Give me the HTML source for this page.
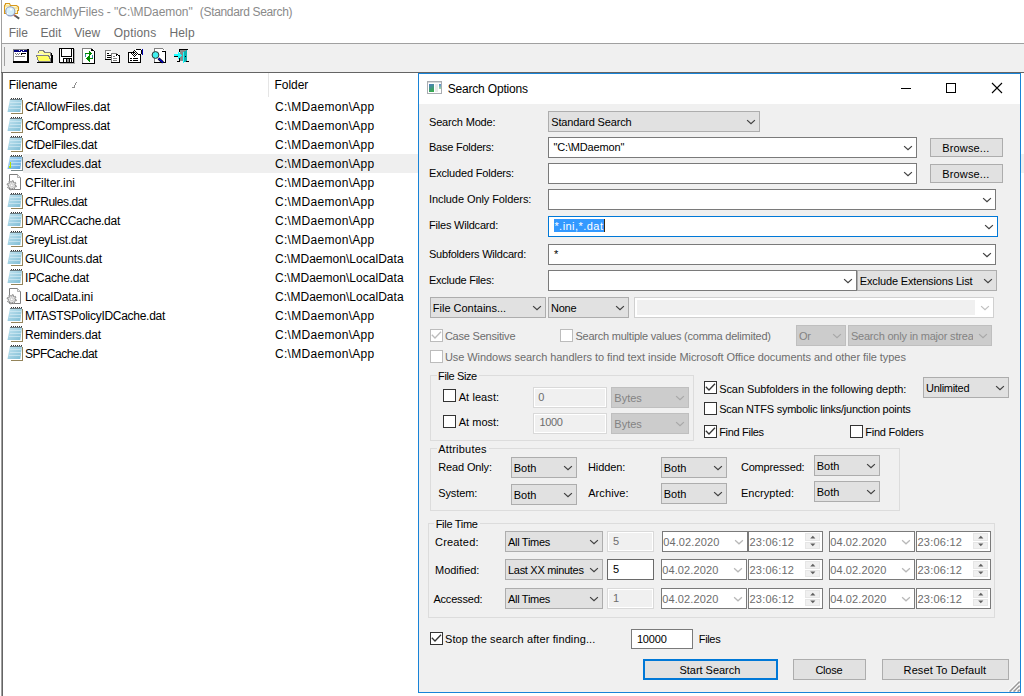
<!DOCTYPE html>
<html><head><meta charset="utf-8"><style>
html,body{margin:0;padding:0;width:1024px;height:696px;overflow:hidden;background:#fff;position:relative}
.a{position:absolute;box-sizing:border-box}
.t{font-family:"Liberation Sans",sans-serif;line-height:14px;white-space:pre;}
svg.a{overflow:visible}
</style></head><body>
<div class="a" style="left:1px;top:0px;width:1px;height:696px;background:#a0a0a0;"></div>
<svg class="a" style="left:0px;top:0px" width="24" height="24" viewBox="0 0 24 24" shape-rendering="crispEdges"><g shape-rendering="geometricPrecision">
<path d="M4.5 13.5 V5.5 L5.5 4.5 V3.5 H9.5 L10.5 5.5 H16.5 L18.5 7 V10.5 H17.5 V13.5z" fill="#fffbd0" stroke="#d8981c" stroke-width="1.1"/>
<path d="M5 6 H10 L11 8 H18" fill="none" stroke="#f0c860" stroke-width="0.8"/>
<path d="M14 15 L19.2 18.6" stroke="#5a5a5a" stroke-width="2"/>
<path d="M13.3 14.6 L15.5 16.3" stroke="#f06040" stroke-width="1.4" opacity="0.6"/>
<circle cx="10.3" cy="11.3" r="4.6" fill="#d6f0fb" stroke="#8c9cc4" stroke-width="1.1"/>
<rect x="10" y="8.5" width="2" height="2" fill="#fff"/><rect x="6.8" y="12.8" width="1.4" height="1.4" fill="#fff"/></g></svg>
<div class="a t" id="t0" style="left:24.90px;top:5px;color:#8a8a8a;font-size:12px;letter-spacing:-0.051px;">SearchMyFiles - &quot;C:\MDaemon&quot;</div>
<div class="a t" id="t1" style="left:199.80px;top:5px;color:#8a8a8a;font-size:12px;letter-spacing:-0.333px;">(Standard Search)</div>
<div class="a t" id="t2" style="left:8.80px;top:26px;color:#6d6d6d;font-size:12px;letter-spacing:-0.111px;">File</div>
<div class="a t" id="t3" style="left:40.40px;top:26px;color:#6d6d6d;font-size:12px;letter-spacing:0.078px;">Edit</div>
<div class="a t" id="t4" style="left:74.20px;top:26px;color:#6d6d6d;font-size:12px;letter-spacing:0.026px;">View</div>
<div class="a t" id="t5" style="left:113.80px;top:26px;color:#6d6d6d;font-size:12px;letter-spacing:0.177px;">Options</div>
<div class="a t" id="t6" style="left:169.40px;top:26px;color:#6d6d6d;font-size:12px;letter-spacing:0.178px;">Help</div>
<div class="a" style="left:2px;top:43px;width:1022px;height:1px;background:#a0a0a0;"></div>
<div class="a" style="left:2px;top:44px;width:1022px;height:28px;background:#f0f0f0;"></div>
<div class="a" style="left:4px;top:47px;width:1px;height:19px;background:#a0a0a0;"></div>
<div class="a" style="left:1px;top:72px;width:1023px;height:1px;background:#646464;"></div>
<div class="a" style="left:2px;top:73px;width:1px;height:623px;background:#646464;"></div>
<div class="a t" id="t7" style="left:8.80px;top:78px;color:#000;font-size:12px;letter-spacing:-0.107px;">Filename</div>
<div class="a" style="left:76px;top:82px;width:1px;height:1px;background:#8e8e8e;"></div>
<div class="a" style="left:75px;top:83px;width:1px;height:1px;background:#8e8e8e;"></div>
<div class="a" style="left:75px;top:84px;width:1px;height:1px;background:#8e8e8e;"></div>
<div class="a" style="left:74px;top:85px;width:1px;height:1px;background:#8e8e8e;"></div>
<div class="a" style="left:74px;top:86px;width:1px;height:1px;background:#8e8e8e;"></div>
<div class="a" style="left:72px;top:87px;width:1px;height:1px;background:#8e8e8e;"></div>
<div class="a" style="left:73px;top:87px;width:1px;height:1px;background:#8e8e8e;"></div>
<div class="a" style="left:74px;top:87px;width:1px;height:1px;background:#8e8e8e;"></div>
<div class="a" style="left:268px;top:73px;width:1px;height:24px;background:#e5e5e5;"></div>
<div class="a t" id="t8" style="left:274.60px;top:78px;color:#000;font-size:12px;letter-spacing:-0.069px;">Folder</div>
<div class="a" style="left:23px;top:154px;width:1001px;height:19px;background:#efefef;"></div>
<svg class="a" style="left:6px;top:97px" width="18" height="18" viewBox="0 0 18 18" shape-rendering="crispEdges"><defs><linearGradient id="g0" x1="0" y1="0" x2="1" y2="1"><stop offset="0" stop-color="#c6e6f2"/><stop offset="1" stop-color="#7dbcd4"/></linearGradient></defs>
<path d="M5 3 h11.5 v13.5 h-11.5z" fill="#fff"/>
<path d="M16.5 3 V16.5 H5" fill="none" stroke="#94845a" stroke-width="1"/>
<path d="M4 2 H16 L14.3 15 H1.5z" fill="url(#g0)" shape-rendering="geometricPrecision"/>
<path d="M4 5.5h11M3.6 8.5h11M3.2 11.5h11" stroke="#d8eef6" stroke-width="0.8" opacity="0.8"/>
<path d="M5 1.5h1M7 1.5h1M9 1.5h1M11 1.5h1M13 1.5h1M15 1.5h1" stroke="#3a3a3a" stroke-width="1"/><path d="M4 2.5h12" stroke="#6a7a80" stroke-width="1"/></svg>
<div class="a t" id="t9" style="left:25.00px;top:100px;color:#000;font-size:12px;letter-spacing:-0.064px;">CfAllowFiles.dat</div>
<div class="a t" id="t10" style="left:275.00px;top:100px;color:#000;font-size:12px;letter-spacing:0.295px;">C:\MDaemon\App</div>
<svg class="a" style="left:6px;top:116px" width="18" height="18" viewBox="0 0 18 18" shape-rendering="crispEdges"><defs><linearGradient id="g1" x1="0" y1="0" x2="1" y2="1"><stop offset="0" stop-color="#c6e6f2"/><stop offset="1" stop-color="#7dbcd4"/></linearGradient></defs>
<path d="M5 3 h11.5 v13.5 h-11.5z" fill="#fff"/>
<path d="M16.5 3 V16.5 H5" fill="none" stroke="#94845a" stroke-width="1"/>
<path d="M4 2 H16 L14.3 15 H1.5z" fill="url(#g1)" shape-rendering="geometricPrecision"/>
<path d="M4 5.5h11M3.6 8.5h11M3.2 11.5h11" stroke="#d8eef6" stroke-width="0.8" opacity="0.8"/>
<path d="M5 1.5h1M7 1.5h1M9 1.5h1M11 1.5h1M13 1.5h1M15 1.5h1" stroke="#3a3a3a" stroke-width="1"/><path d="M4 2.5h12" stroke="#6a7a80" stroke-width="1"/></svg>
<div class="a t" id="t11" style="left:25.00px;top:119px;color:#000;font-size:12px;letter-spacing:-0.122px;">CfCompress.dat</div>
<div class="a t" id="t12" style="left:275.00px;top:119px;color:#000;font-size:12px;letter-spacing:0.295px;">C:\MDaemon\App</div>
<svg class="a" style="left:6px;top:135px" width="18" height="18" viewBox="0 0 18 18" shape-rendering="crispEdges"><defs><linearGradient id="g2" x1="0" y1="0" x2="1" y2="1"><stop offset="0" stop-color="#c6e6f2"/><stop offset="1" stop-color="#7dbcd4"/></linearGradient></defs>
<path d="M5 3 h11.5 v13.5 h-11.5z" fill="#fff"/>
<path d="M16.5 3 V16.5 H5" fill="none" stroke="#94845a" stroke-width="1"/>
<path d="M4 2 H16 L14.3 15 H1.5z" fill="url(#g2)" shape-rendering="geometricPrecision"/>
<path d="M4 5.5h11M3.6 8.5h11M3.2 11.5h11" stroke="#d8eef6" stroke-width="0.8" opacity="0.8"/>
<path d="M5 1.5h1M7 1.5h1M9 1.5h1M11 1.5h1M13 1.5h1M15 1.5h1" stroke="#3a3a3a" stroke-width="1"/><path d="M4 2.5h12" stroke="#6a7a80" stroke-width="1"/></svg>
<div class="a t" id="t13" style="left:25.00px;top:138px;color:#000;font-size:12px;letter-spacing:-0.240px;">CfDelFiles.dat</div>
<div class="a t" id="t14" style="left:275.00px;top:138px;color:#000;font-size:12px;letter-spacing:0.295px;">C:\MDaemon\App</div>
<svg class="a" style="left:6px;top:154px" width="18" height="18" viewBox="0 0 18 18" shape-rendering="crispEdges"><defs><linearGradient id="g3" x1="0" y1="0" x2="1" y2="1"><stop offset="0" stop-color="#b4dcf6"/><stop offset="1" stop-color="#5aa6e0"/></linearGradient></defs>
<path d="M5 3 h11.5 v13.5 h-11.5z" fill="#fff"/>
<path d="M16.5 3 V16.5 H5" fill="none" stroke="#7a8888" stroke-width="1"/>
<path d="M4 2 H16 L14.3 15 H1.5z" fill="url(#g3)" shape-rendering="geometricPrecision"/>
<path d="M4 5.5h11M3.6 8.5h11M3.2 11.5h11" stroke="#d8eef6" stroke-width="0.8" opacity="0.8"/>
<path d="M5 1.5h1M7 1.5h1M9 1.5h1M11 1.5h1M13 1.5h1M15 1.5h1" stroke="#3a3a3a" stroke-width="1"/><path d="M4 2.5h12" stroke="#6a7a80" stroke-width="1"/><path d="M4.5 8 V13.5 H3.5 V12" fill="none" stroke="#b8e000" stroke-width="1.6"/></svg>
<div class="a t" id="t15" style="left:25.00px;top:157px;color:#000;font-size:12px;letter-spacing:-0.051px;">cfexcludes.dat</div>
<div class="a t" id="t16" style="left:275.00px;top:157px;color:#000;font-size:12px;letter-spacing:0.295px;">C:\MDaemon\App</div>
<svg class="a" style="left:6px;top:173px" width="18" height="18" viewBox="0 0 18 18" shape-rendering="crispEdges"><g shape-rendering="geometricPrecision"><path d="M3.5 1.5 H11.5 L14.5 4.5 V16.5 H3.5z" fill="#fff" stroke="#7f7f7f" stroke-width="1"/>
<path d="M11.5 1.5 V4.5 H14.5" fill="#f0f0f0" stroke="#9a9a9a" stroke-width="0.8"/>
<g transform="translate(5.75,12.3)"><path d="M3.30 0.00 L4.67 0.55 L4.41 1.63 L2.94 1.50 L2.33 2.33 L2.91 3.69 L1.97 4.27 L1.02 3.14 L0.00 3.30 L-0.55 4.67 L-1.63 4.41 L-1.50 2.94 L-2.33 2.33 L-3.69 2.91 L-4.27 1.97 L-3.14 1.02 L-3.30 0.00 L-4.67 -0.55 L-4.41 -1.63 L-2.94 -1.50 L-2.33 -2.33 L-2.91 -3.69 L-1.97 -4.27 L-1.02 -3.14 L-0.00 -3.30 L0.55 -4.67 L1.63 -4.41 L1.50 -2.94 L2.33 -2.33 L3.69 -2.91 L4.27 -1.97 L3.14 -1.02z" fill="#e4e4e4" stroke="#8c8c8c" stroke-width="1"/><circle r="1.4" fill="#fff" stroke="#b0b0b0" stroke-width="0.6"/></g></g></svg>
<div class="a t" id="t17" style="left:25.00px;top:176px;color:#000;font-size:12px;letter-spacing:-0.001px;">CFilter.ini</div>
<div class="a t" id="t18" style="left:275.00px;top:176px;color:#000;font-size:12px;letter-spacing:0.295px;">C:\MDaemon\App</div>
<svg class="a" style="left:6px;top:192px" width="18" height="18" viewBox="0 0 18 18" shape-rendering="crispEdges"><defs><linearGradient id="g5" x1="0" y1="0" x2="1" y2="1"><stop offset="0" stop-color="#c6e6f2"/><stop offset="1" stop-color="#7dbcd4"/></linearGradient></defs>
<path d="M5 3 h11.5 v13.5 h-11.5z" fill="#fff"/>
<path d="M16.5 3 V16.5 H5" fill="none" stroke="#94845a" stroke-width="1"/>
<path d="M4 2 H16 L14.3 15 H1.5z" fill="url(#g5)" shape-rendering="geometricPrecision"/>
<path d="M4 5.5h11M3.6 8.5h11M3.2 11.5h11" stroke="#d8eef6" stroke-width="0.8" opacity="0.8"/>
<path d="M5 1.5h1M7 1.5h1M9 1.5h1M11 1.5h1M13 1.5h1M15 1.5h1" stroke="#3a3a3a" stroke-width="1"/><path d="M4 2.5h12" stroke="#6a7a80" stroke-width="1"/></svg>
<div class="a t" id="t19" style="left:25.00px;top:195px;color:#000;font-size:12px;letter-spacing:-0.428px;">CFRules.dat</div>
<div class="a t" id="t20" style="left:275.00px;top:195px;color:#000;font-size:12px;letter-spacing:0.295px;">C:\MDaemon\App</div>
<svg class="a" style="left:6px;top:211px" width="18" height="18" viewBox="0 0 18 18" shape-rendering="crispEdges"><defs><linearGradient id="g6" x1="0" y1="0" x2="1" y2="1"><stop offset="0" stop-color="#c6e6f2"/><stop offset="1" stop-color="#7dbcd4"/></linearGradient></defs>
<path d="M5 3 h11.5 v13.5 h-11.5z" fill="#fff"/>
<path d="M16.5 3 V16.5 H5" fill="none" stroke="#94845a" stroke-width="1"/>
<path d="M4 2 H16 L14.3 15 H1.5z" fill="url(#g6)" shape-rendering="geometricPrecision"/>
<path d="M4 5.5h11M3.6 8.5h11M3.2 11.5h11" stroke="#d8eef6" stroke-width="0.8" opacity="0.8"/>
<path d="M5 1.5h1M7 1.5h1M9 1.5h1M11 1.5h1M13 1.5h1M15 1.5h1" stroke="#3a3a3a" stroke-width="1"/><path d="M4 2.5h12" stroke="#6a7a80" stroke-width="1"/></svg>
<div class="a t" id="t21" style="left:25.00px;top:214px;color:#000;font-size:12px;letter-spacing:-0.265px;">DMARCCache.dat</div>
<div class="a t" id="t22" style="left:275.00px;top:214px;color:#000;font-size:12px;letter-spacing:0.295px;">C:\MDaemon\App</div>
<svg class="a" style="left:6px;top:230px" width="18" height="18" viewBox="0 0 18 18" shape-rendering="crispEdges"><defs><linearGradient id="g7" x1="0" y1="0" x2="1" y2="1"><stop offset="0" stop-color="#c6e6f2"/><stop offset="1" stop-color="#7dbcd4"/></linearGradient></defs>
<path d="M5 3 h11.5 v13.5 h-11.5z" fill="#fff"/>
<path d="M16.5 3 V16.5 H5" fill="none" stroke="#94845a" stroke-width="1"/>
<path d="M4 2 H16 L14.3 15 H1.5z" fill="url(#g7)" shape-rendering="geometricPrecision"/>
<path d="M4 5.5h11M3.6 8.5h11M3.2 11.5h11" stroke="#d8eef6" stroke-width="0.8" opacity="0.8"/>
<path d="M5 1.5h1M7 1.5h1M9 1.5h1M11 1.5h1M13 1.5h1M15 1.5h1" stroke="#3a3a3a" stroke-width="1"/><path d="M4 2.5h12" stroke="#6a7a80" stroke-width="1"/></svg>
<div class="a t" id="t23" style="left:25.00px;top:233px;color:#000;font-size:12px;letter-spacing:-0.225px;">GreyList.dat</div>
<div class="a t" id="t24" style="left:275.00px;top:233px;color:#000;font-size:12px;letter-spacing:0.295px;">C:\MDaemon\App</div>
<svg class="a" style="left:6px;top:249px" width="18" height="18" viewBox="0 0 18 18" shape-rendering="crispEdges"><defs><linearGradient id="g8" x1="0" y1="0" x2="1" y2="1"><stop offset="0" stop-color="#c6e6f2"/><stop offset="1" stop-color="#7dbcd4"/></linearGradient></defs>
<path d="M5 3 h11.5 v13.5 h-11.5z" fill="#fff"/>
<path d="M16.5 3 V16.5 H5" fill="none" stroke="#94845a" stroke-width="1"/>
<path d="M4 2 H16 L14.3 15 H1.5z" fill="url(#g8)" shape-rendering="geometricPrecision"/>
<path d="M4 5.5h11M3.6 8.5h11M3.2 11.5h11" stroke="#d8eef6" stroke-width="0.8" opacity="0.8"/>
<path d="M5 1.5h1M7 1.5h1M9 1.5h1M11 1.5h1M13 1.5h1M15 1.5h1" stroke="#3a3a3a" stroke-width="1"/><path d="M4 2.5h12" stroke="#6a7a80" stroke-width="1"/></svg>
<div class="a t" id="t25" style="left:25.00px;top:252px;color:#000;font-size:12px;letter-spacing:-0.183px;">GUICounts.dat</div>
<div class="a t" id="t26" style="left:275.00px;top:252px;color:#000;font-size:12px;letter-spacing:0.027px;">C:\MDaemon\LocalData</div>
<svg class="a" style="left:6px;top:268px" width="18" height="18" viewBox="0 0 18 18" shape-rendering="crispEdges"><defs><linearGradient id="g9" x1="0" y1="0" x2="1" y2="1"><stop offset="0" stop-color="#c6e6f2"/><stop offset="1" stop-color="#7dbcd4"/></linearGradient></defs>
<path d="M5 3 h11.5 v13.5 h-11.5z" fill="#fff"/>
<path d="M16.5 3 V16.5 H5" fill="none" stroke="#94845a" stroke-width="1"/>
<path d="M4 2 H16 L14.3 15 H1.5z" fill="url(#g9)" shape-rendering="geometricPrecision"/>
<path d="M4 5.5h11M3.6 8.5h11M3.2 11.5h11" stroke="#d8eef6" stroke-width="0.8" opacity="0.8"/>
<path d="M5 1.5h1M7 1.5h1M9 1.5h1M11 1.5h1M13 1.5h1M15 1.5h1" stroke="#3a3a3a" stroke-width="1"/><path d="M4 2.5h12" stroke="#6a7a80" stroke-width="1"/></svg>
<div class="a t" id="t27" style="left:25.00px;top:271px;color:#000;font-size:12px;letter-spacing:-0.186px;">IPCache.dat</div>
<div class="a t" id="t28" style="left:275.00px;top:271px;color:#000;font-size:12px;letter-spacing:0.027px;">C:\MDaemon\LocalData</div>
<svg class="a" style="left:6px;top:287px" width="18" height="18" viewBox="0 0 18 18" shape-rendering="crispEdges"><g shape-rendering="geometricPrecision"><path d="M3.5 1.5 H11.5 L14.5 4.5 V16.5 H3.5z" fill="#fff" stroke="#7f7f7f" stroke-width="1"/>
<path d="M11.5 1.5 V4.5 H14.5" fill="#f0f0f0" stroke="#9a9a9a" stroke-width="0.8"/>
<g transform="translate(5.75,12.3)"><path d="M3.30 0.00 L4.67 0.55 L4.41 1.63 L2.94 1.50 L2.33 2.33 L2.91 3.69 L1.97 4.27 L1.02 3.14 L0.00 3.30 L-0.55 4.67 L-1.63 4.41 L-1.50 2.94 L-2.33 2.33 L-3.69 2.91 L-4.27 1.97 L-3.14 1.02 L-3.30 0.00 L-4.67 -0.55 L-4.41 -1.63 L-2.94 -1.50 L-2.33 -2.33 L-2.91 -3.69 L-1.97 -4.27 L-1.02 -3.14 L-0.00 -3.30 L0.55 -4.67 L1.63 -4.41 L1.50 -2.94 L2.33 -2.33 L3.69 -2.91 L4.27 -1.97 L3.14 -1.02z" fill="#e4e4e4" stroke="#8c8c8c" stroke-width="1"/><circle r="1.4" fill="#fff" stroke="#b0b0b0" stroke-width="0.6"/></g></g></svg>
<div class="a t" id="t29" style="left:25.00px;top:290px;color:#000;font-size:12px;letter-spacing:-0.106px;">LocalData.ini</div>
<div class="a t" id="t30" style="left:275.00px;top:290px;color:#000;font-size:12px;letter-spacing:0.027px;">C:\MDaemon\LocalData</div>
<svg class="a" style="left:6px;top:306px" width="18" height="18" viewBox="0 0 18 18" shape-rendering="crispEdges"><defs><linearGradient id="g11" x1="0" y1="0" x2="1" y2="1"><stop offset="0" stop-color="#c6e6f2"/><stop offset="1" stop-color="#7dbcd4"/></linearGradient></defs>
<path d="M5 3 h11.5 v13.5 h-11.5z" fill="#fff"/>
<path d="M16.5 3 V16.5 H5" fill="none" stroke="#94845a" stroke-width="1"/>
<path d="M4 2 H16 L14.3 15 H1.5z" fill="url(#g11)" shape-rendering="geometricPrecision"/>
<path d="M4 5.5h11M3.6 8.5h11M3.2 11.5h11" stroke="#d8eef6" stroke-width="0.8" opacity="0.8"/>
<path d="M5 1.5h1M7 1.5h1M9 1.5h1M11 1.5h1M13 1.5h1M15 1.5h1" stroke="#3a3a3a" stroke-width="1"/><path d="M4 2.5h12" stroke="#6a7a80" stroke-width="1"/></svg>
<div class="a t" id="t31" style="left:25.00px;top:309px;color:#000;font-size:12px;letter-spacing:-0.283px;">MTASTSPolicyIDCache.dat</div>
<div class="a t" id="t32" style="left:275.00px;top:309px;color:#000;font-size:12px;letter-spacing:0.295px;">C:\MDaemon\App</div>
<svg class="a" style="left:6px;top:325px" width="18" height="18" viewBox="0 0 18 18" shape-rendering="crispEdges"><defs><linearGradient id="g12" x1="0" y1="0" x2="1" y2="1"><stop offset="0" stop-color="#c6e6f2"/><stop offset="1" stop-color="#7dbcd4"/></linearGradient></defs>
<path d="M5 3 h11.5 v13.5 h-11.5z" fill="#fff"/>
<path d="M16.5 3 V16.5 H5" fill="none" stroke="#94845a" stroke-width="1"/>
<path d="M4 2 H16 L14.3 15 H1.5z" fill="url(#g12)" shape-rendering="geometricPrecision"/>
<path d="M4 5.5h11M3.6 8.5h11M3.2 11.5h11" stroke="#d8eef6" stroke-width="0.8" opacity="0.8"/>
<path d="M5 1.5h1M7 1.5h1M9 1.5h1M11 1.5h1M13 1.5h1M15 1.5h1" stroke="#3a3a3a" stroke-width="1"/><path d="M4 2.5h12" stroke="#6a7a80" stroke-width="1"/></svg>
<div class="a t" id="t33" style="left:25.00px;top:328px;color:#000;font-size:12px;letter-spacing:-0.157px;">Reminders.dat</div>
<div class="a t" id="t34" style="left:275.00px;top:328px;color:#000;font-size:12px;letter-spacing:0.295px;">C:\MDaemon\App</div>
<svg class="a" style="left:6px;top:344px" width="18" height="18" viewBox="0 0 18 18" shape-rendering="crispEdges"><defs><linearGradient id="g13" x1="0" y1="0" x2="1" y2="1"><stop offset="0" stop-color="#c6e6f2"/><stop offset="1" stop-color="#7dbcd4"/></linearGradient></defs>
<path d="M5 3 h11.5 v13.5 h-11.5z" fill="#fff"/>
<path d="M16.5 3 V16.5 H5" fill="none" stroke="#94845a" stroke-width="1"/>
<path d="M4 2 H16 L14.3 15 H1.5z" fill="url(#g13)" shape-rendering="geometricPrecision"/>
<path d="M4 5.5h11M3.6 8.5h11M3.2 11.5h11" stroke="#d8eef6" stroke-width="0.8" opacity="0.8"/>
<path d="M5 1.5h1M7 1.5h1M9 1.5h1M11 1.5h1M13 1.5h1M15 1.5h1" stroke="#3a3a3a" stroke-width="1"/><path d="M4 2.5h12" stroke="#6a7a80" stroke-width="1"/></svg>
<div class="a t" id="t35" style="left:25.00px;top:347px;color:#000;font-size:12px;letter-spacing:-0.504px;">SPFCache.dat</div>
<div class="a t" id="t36" style="left:275.00px;top:347px;color:#000;font-size:12px;letter-spacing:0.295px;">C:\MDaemon\App</div>
<svg class="a" style="left:0px;top:0px" width="200" height="70" viewBox="0 0 200 70" shape-rendering="crispEdges"><rect x="13" y="49" width="14" height="13" fill="#808080"/><rect x="14" y="50" width="13" height="12" fill="#fff"/><rect x="27" y="49" width="2" height="14" fill="#000"/><rect x="13" y="61" width="16" height="2" fill="#000"/><rect x="14" y="50" width="13" height="2" fill="#000080"/><rect x="15" y="53" width="1" height="1" fill="#808080"/><rect x="17" y="53" width="1" height="1" fill="#808080"/><rect x="16" y="54" width="1" height="1" fill="#808080"/><rect x="19" y="53" width="1" height="1" fill="#808080"/><rect x="18" y="54" width="1" height="1" fill="#808080"/><rect x="21" y="53" width="5" height="1" fill="#000"/><rect x="21" y="54" width="1" height="1" fill="#000"/><rect x="15" y="56" width="10" height="1" fill="#808080"/><rect x="19" y="50" width="1" height="1" fill="#fff"/><rect x="21" y="51" width="1" height="1" fill="#fff"/><rect x="23" y="50" width="1" height="1" fill="#fff"/><path d="M37.5 53.5 L39.5 50.5 H43.5 L44.5 52.5 H50.5 V56" fill="#ffff9a" stroke="#808080" stroke-width="1"/><path d="M36.5 55.5 H48.5 L51.5 61.5 H38.5z" fill="#ffff60" stroke="#808080" stroke-width="1"/><rect x="37" y="62" width="16" height="1" fill="#000"/><rect x="51" y="53" width="1" height="9" fill="#000"/><rect x="52" y="55" width="1" height="8" fill="#000"/><rect x="59" y="48" width="15" height="15" fill="#000"/><rect x="60" y="49" width="13" height="13" fill="#fff"/><rect x="61" y="48" width="11" height="9" fill="#000"/><rect x="62" y="49" width="9" height="7" fill="#fff"/><rect x="63" y="58" width="9" height="5" fill="#000"/><rect x="64" y="59" width="2" height="3" fill="#fff"/><rect x="67" y="59" width="2" height="3" fill="#909090"/><rect x="70" y="59" width="1" height="3" fill="#fff"/><rect x="72" y="49" width="1" height="1" fill="#fff"/><rect x="74" y="49" width="1" height="15" fill="#b0b0b0"/><rect x="60" y="63" width="15" height="1" fill="#b0b0b0"/><rect x="82" y="48" width="1" height="15" fill="#808080"/><rect x="82" y="48" width="9" height="1" fill="#808080"/><rect x="83" y="49" width="11" height="14" fill="#fff"/><rect x="94" y="51" width="1" height="13" fill="#000"/><rect x="82" y="63" width="13" height="1" fill="#000"/><rect x="91" y="48" width="1" height="1" fill="#808080"/><rect x="92" y="49" width="1" height="1" fill="#000"/><rect x="93" y="50" width="1" height="1" fill="#000"/><rect x="91" y="49" width="1" height="2" fill="#000"/><rect x="91" y="50" width="2" height="1" fill="#000"/><path d="M85.5 56 V53.5 H89" fill="none" stroke="#008a00" stroke-width="1.6"/><path d="M88.5 50.5 L92 53.5 L88.5 56.5z" fill="#008a00"/><path d="M92.5 55 V58.5 H89" fill="none" stroke="#008a00" stroke-width="1.6"/><path d="M89.5 55.5 L86 58.5 L89.5 61.5z" fill="#008a00"/><rect x="85" y="54" width="1" height="3" fill="#2a8aa0"/><rect x="92" y="55" width="1" height="3" fill="#2a8aa0"/><rect x="105" y="50" width="1" height="10" fill="#808080"/><rect x="105" y="50" width="6" height="1" fill="#808080"/><rect x="106" y="51" width="6" height="8" fill="#fff"/><rect x="105" y="59" width="7" height="1" fill="#000"/><rect x="107" y="53" width="2" height="1" fill="#000"/><rect x="107" y="55" width="4" height="1" fill="#000"/><rect x="107" y="57" width="4" height="1" fill="#000"/><rect x="111" y="53" width="1" height="10" fill="#808080"/><rect x="111" y="53" width="5" height="1" fill="#808080"/><rect x="112" y="54" width="7" height="8" fill="#fff"/><rect x="119" y="55" width="1" height="8" fill="#000"/><rect x="111" y="62" width="9" height="1" fill="#000"/><rect x="116" y="53" width="1" height="1" fill="#808080"/><rect x="117" y="54" width="1" height="1" fill="#000"/><rect x="118" y="55" width="1" height="1" fill="#000"/><rect x="116" y="54" width="1" height="2" fill="#000"/><rect x="113" y="56" width="2" height="1" fill="#808080"/><rect x="113" y="58" width="4" height="1" fill="#808080"/><rect x="113" y="60" width="4" height="1" fill="#808080"/><rect x="128" y="52" width="13" height="11" fill="#000"/><rect x="129" y="53" width="11" height="9" fill="#fff"/><rect x="130" y="58" width="2" height="1" fill="#000"/><rect x="133" y="58" width="5" height="1" fill="#000"/><rect x="130" y="60" width="2" height="1" fill="#000"/><rect x="133" y="60" width="5" height="1" fill="#000"/><rect x="135" y="49" width="6" height="6" fill="#fff"/><rect x="136" y="49" width="5" height="1" fill="#000"/><rect x="141" y="50" width="1" height="4" fill="#000"/><rect x="138" y="54" width="3" height="1" fill="#000"/><rect x="142" y="49" width="1" height="6" fill="#0000b0"/><rect x="131" y="53" width="1" height="1" fill="#000"/><rect x="132" y="52" width="1" height="1" fill="#000"/><rect x="132" y="54" width="1" height="1" fill="#000"/><rect x="133" y="51" width="1" height="1" fill="#000"/><rect x="133" y="53" width="1" height="1" fill="#000"/><rect x="133" y="55" width="1" height="1" fill="#000"/><rect x="134" y="50" width="1" height="1" fill="#000"/><rect x="134" y="52" width="1" height="1" fill="#000"/><rect x="134" y="54" width="1" height="1" fill="#000"/><rect x="134" y="56" width="1" height="1" fill="#000"/><rect x="135" y="51" width="1" height="1" fill="#000"/><rect x="135" y="53" width="1" height="1" fill="#000"/><rect x="135" y="55" width="1" height="1" fill="#000"/><rect x="136" y="52" width="1" height="1" fill="#000"/><rect x="136" y="54" width="1" height="1" fill="#000"/><rect x="137" y="53" width="1" height="1" fill="#000"/><rect x="154" y="48" width="1" height="14" fill="#808080"/><rect x="154" y="48" width="8" height="1" fill="#808080"/><rect x="155" y="49" width="10" height="13" fill="#fff"/><rect x="165" y="51" width="1" height="12" fill="#000"/><rect x="154" y="62" width="12" height="1" fill="#000"/><rect x="162" y="48" width="1" height="1" fill="#808080"/><rect x="163" y="49" width="1" height="1" fill="#808080"/><rect x="162" y="51" width="3" height="1" fill="#000"/><circle cx="155.5" cy="55" r="3.4" fill="#40f0f0" stroke="#303030" stroke-width="1" shape-rendering="geometricPrecision"/><path d="M158.5 58.5 L163 62.5" stroke="#000" stroke-width="2.6" shape-rendering="geometricPrecision"/><path d="M158.5 58.5 L163 62.5" stroke="#0000e0" stroke-width="1.2" shape-rendering="geometricPrecision"/><rect x="179" y="49" width="9" height="1" fill="#000"/><rect x="179" y="49" width="1" height="3" fill="#000"/><rect x="179" y="55" width="1" height="7" fill="#000"/><rect x="177" y="61" width="2" height="1" fill="#000"/><rect x="186" y="61" width="3" height="1" fill="#000"/><rect x="180" y="50" width="6" height="11" fill="#8a8a8a"/><path d="M183 52 L187 50 V61 L183 63z" fill="#10b0b0"/><path d="M183 52 V63" stroke="#20ffff" stroke-width="1"/><rect x="185" y="56" width="1" height="1" fill="#000"/><rect x="174" y="54" width="5" height="3" fill="#20ffff"/><rect x="174" y="56" width="4" height="1" fill="#000"/><path d="M178 51.5 L182 55.5 L178 59.5z" fill="#20ffff"/></svg>
<div class="a" style="left:418px;top:73px;width:603px;height:620px;background:#f0f0f0;box-shadow:inset 0 0 0 1px #1883d7;"></div>
<div class="a" style="left:419px;top:74px;width:601px;height:30px;background:#fff;"></div>
<svg class="a" style="left:427px;top:81px" width="16" height="14" viewBox="0 0 16 14" shape-rendering="crispEdges"><defs><linearGradient id="dg" x1="0" y1="0" x2="0.3" y2="1"><stop offset="0" stop-color="#4f7cc4"/><stop offset="1" stop-color="#38a850"/></linearGradient><linearGradient id="dg2" x1="0" y1="0" x2="0" y2="1"><stop offset="0" stop-color="#5a88d0"/><stop offset="1" stop-color="#a0e0a0"/></linearGradient></defs><rect x="0.5" y="0.5" width="14" height="12" fill="#fff" stroke="#a9adb2"/><rect x="1" y="1" width="13" height="1" fill="#d8dadc"/><rect x="2" y="3" width="5" height="8" fill="url(#dg)"/><rect x="8" y="3" width="3" height="8" fill="#e8e8e8"/><rect x="12" y="3" width="2" height="5" fill="url(#dg2)"/></svg>
<div class="a t" id="t37" style="left:447.65px;top:82px;color:#000;font-size:12px;letter-spacing:-0.176px;">Search Options</div>
<div class="a" style="left:901px;top:88px;width:10px;height:1px;background:#000;"></div>
<svg class="a" style="left:946px;top:83px" width="11" height="11" viewBox="0 0 11 11" shape-rendering="crispEdges"><rect x="0.5" y="0.5" width="9" height="9" fill="none" stroke="#000"/></svg>
<svg class="a" style="left:991px;top:82px" width="12" height="12" viewBox="0 0 12 12" shape-rendering="crispEdges"><path d="M1 1 L11 11 M11 1 L1 11" stroke="#000" stroke-width="1.1" shape-rendering="geometricPrecision"/></svg>
<div class="a t" id="t38" style="left:429.00px;top:115px;color:#000;font-size:11px;letter-spacing:-0.174px;">Search Mode:</div>
<div class="a t" id="t39" style="left:429.00px;top:140px;color:#000;font-size:11px;letter-spacing:-0.229px;">Base Folders:</div>
<div class="a t" id="t40" style="left:429.00px;top:166px;color:#000;font-size:11px;letter-spacing:-0.179px;">Excluded Folders:</div>
<div class="a t" id="t41" style="left:429.00px;top:192px;color:#000;font-size:11px;letter-spacing:-0.078px;">Include Only Folders:</div>
<div class="a t" id="t42" style="left:429.00px;top:218px;color:#000;font-size:11px;letter-spacing:-0.208px;">Files Wildcard:</div>
<div class="a t" id="t43" style="left:429.00px;top:247px;color:#000;font-size:11px;letter-spacing:-0.225px;">Subfolders Wildcard:</div>
<div class="a t" id="t44" style="left:429.00px;top:273px;color:#000;font-size:11px;letter-spacing:-0.249px;">Exclude Files:</div>
<div class="a" style="left:548px;top:111px;width:212px;height:21px;background:#e1e1e1;box-shadow:inset 0 0 0 1px #adadad;"></div>
<svg class="a" style="left:745px;top:117px" width="13" height="8" viewBox="0 0 13 8" shape-rendering="crispEdges"><path d="M2.10 3.10 L6.00 6.60 L9.90 3.10" fill="none" stroke="#404040" stroke-width="1.25" shape-rendering="geometricPrecision"/></svg>
<div class="a t" id="t45" style="left:551.20px;top:115px;color:#000;font-size:11px;letter-spacing:-0.144px;">Standard Search</div>
<div class="a" style="left:548px;top:137px;width:369px;height:21px;background:#fff;box-shadow:inset 0 0 0 1px #7a7a7a;"></div>
<svg class="a" style="left:902px;top:143px" width="13" height="8" viewBox="0 0 13 8" shape-rendering="crispEdges"><path d="M2.10 3.10 L6.00 6.60 L9.90 3.10" fill="none" stroke="#404040" stroke-width="1.25" shape-rendering="geometricPrecision"/></svg>
<div class="a t" id="t46" style="left:553.50px;top:140px;color:#000;font-size:11px;letter-spacing:-0.159px;">&quot;C:\MDaemon&quot;</div>
<div class="a" style="left:930px;top:138px;width:73px;height:19px;background:#e1e1e1;box-shadow:inset 0 0 0 1px #adadad;"></div>
<div class="a t" id="t47" style="left:942.30px;top:141px;color:#000;font-size:11px;letter-spacing:0.149px;">Browse...</div>
<div class="a" style="left:548px;top:163px;width:369px;height:21px;background:#fff;box-shadow:inset 0 0 0 1px #7a7a7a;"></div>
<svg class="a" style="left:902px;top:169px" width="13" height="8" viewBox="0 0 13 8" shape-rendering="crispEdges"><path d="M2.10 3.10 L6.00 6.60 L9.90 3.10" fill="none" stroke="#404040" stroke-width="1.25" shape-rendering="geometricPrecision"/></svg>
<div class="a" style="left:930px;top:164px;width:73px;height:19px;background:#e1e1e1;box-shadow:inset 0 0 0 1px #adadad;"></div>
<div class="a t" id="t48" style="left:942.30px;top:167px;color:#000;font-size:11px;letter-spacing:0.149px;">Browse...</div>
<div class="a" style="left:548px;top:189px;width:448px;height:21px;background:#fff;box-shadow:inset 0 0 0 1px #7a7a7a;"></div>
<svg class="a" style="left:981px;top:195px" width="13" height="8" viewBox="0 0 13 8" shape-rendering="crispEdges"><path d="M2.10 3.10 L6.00 6.60 L9.90 3.10" fill="none" stroke="#404040" stroke-width="1.25" shape-rendering="geometricPrecision"/></svg>
<div class="a" style="left:548px;top:216px;width:450px;height:21px;background:#fff;box-shadow:inset 0 0 0 1px #0078d7;"></div>
<svg class="a" style="left:983px;top:222px" width="13" height="8" viewBox="0 0 13 8" shape-rendering="crispEdges"><path d="M2.10 3.10 L6.00 6.60 L9.90 3.10" fill="none" stroke="#404040" stroke-width="1.25" shape-rendering="geometricPrecision"/></svg>
<div class="a" style="left:554px;top:219px;width:51px;height:13px;background:#3399ff;"></div>
<div class="a t" id="t49" style="left:554.40px;top:219px;color:#fff;font-size:11px;letter-spacing:0.452px;">*.ini,*.dat</div>
<div class="a" style="left:604px;top:219px;width:1px;height:13px;background:#3a2a10;"></div>
<div class="a" style="left:548px;top:244px;width:448px;height:21px;background:#fff;box-shadow:inset 0 0 0 1px #7a7a7a;"></div>
<svg class="a" style="left:981px;top:250px" width="13" height="8" viewBox="0 0 13 8" shape-rendering="crispEdges"><path d="M2.10 3.10 L6.00 6.60 L9.90 3.10" fill="none" stroke="#404040" stroke-width="1.25" shape-rendering="geometricPrecision"/></svg>
<div class="a t" id="t50" style="left:553.90px;top:247px;color:#000;font-size:11px;letter-spacing:-0.193px;">*</div>
<div class="a" style="left:548px;top:270px;width:309px;height:21px;background:#fff;box-shadow:inset 0 0 0 1px #7a7a7a;"></div>
<svg class="a" style="left:842px;top:276px" width="13" height="8" viewBox="0 0 13 8" shape-rendering="crispEdges"><path d="M2.10 3.10 L6.00 6.60 L9.90 3.10" fill="none" stroke="#404040" stroke-width="1.25" shape-rendering="geometricPrecision"/></svg>
<div class="a" style="left:857px;top:270px;width:140px;height:21px;background:#e1e1e1;box-shadow:inset 0 0 0 1px #adadad;"></div>
<svg class="a" style="left:982px;top:276px" width="13" height="8" viewBox="0 0 13 8" shape-rendering="crispEdges"><path d="M2.10 3.10 L6.00 6.60 L9.90 3.10" fill="none" stroke="#404040" stroke-width="1.25" shape-rendering="geometricPrecision"/></svg>
<div class="a t" id="t51" style="left:859.80px;top:274px;color:#000;font-size:11px;letter-spacing:-0.155px;">Exclude Extensions List</div>
<div class="a" style="left:430px;top:297px;width:116px;height:21px;background:#e1e1e1;box-shadow:inset 0 0 0 1px #adadad;"></div>
<svg class="a" style="left:531px;top:303px" width="13" height="8" viewBox="0 0 13 8" shape-rendering="crispEdges"><path d="M2.10 3.10 L6.00 6.60 L9.90 3.10" fill="none" stroke="#404040" stroke-width="1.25" shape-rendering="geometricPrecision"/></svg>
<div class="a t" id="t52" style="left:432.80px;top:301px;color:#000;font-size:11px;letter-spacing:-0.005px;">File Contains...</div>
<div class="a" style="left:548px;top:297px;width:81px;height:21px;background:#e1e1e1;box-shadow:inset 0 0 0 1px #adadad;"></div>
<svg class="a" style="left:614px;top:303px" width="13" height="8" viewBox="0 0 13 8" shape-rendering="crispEdges"><path d="M2.10 3.10 L6.00 6.60 L9.90 3.10" fill="none" stroke="#404040" stroke-width="1.25" shape-rendering="geometricPrecision"/></svg>
<div class="a t" id="t53" style="left:551.00px;top:301px;color:#000;font-size:11px;letter-spacing:-0.224px;">None</div>
<div class="a" style="left:634px;top:297px;width:360px;height:21px;background:#fff;box-shadow:inset 0 0 0 1px #d0d0d0;"></div>
<div class="a" style="left:637px;top:300px;width:338px;height:15px;background:#f0f0f0;"></div>
<svg class="a" style="left:979px;top:303px" width="13" height="8" viewBox="0 0 13 8" shape-rendering="crispEdges"><path d="M2.10 3.10 L6.00 6.60 L9.90 3.10" fill="none" stroke="#c0c0c0" stroke-width="1.25" shape-rendering="geometricPrecision"/></svg>
<div class="a" style="left:430px;top:329px;width:13px;height:13px;background:#fff;box-shadow:inset 0 0 0 1px #bcbcbc;"></div>
<svg class="a" style="left:430px;top:329px" width="13" height="13" viewBox="0 0 13 13" shape-rendering="crispEdges"><path d="M1.8 5.8 L5 9 L11 2.8" fill="none" stroke="#bcbcbc" stroke-width="1.3" shape-rendering="geometricPrecision"/></svg>
<div class="a t" id="t54" style="left:444.90px;top:329px;color:#6d6d6d;font-size:11px;letter-spacing:-0.212px;">Case Sensitive</div>
<div class="a" style="left:560px;top:329px;width:13px;height:13px;background:#fff;box-shadow:inset 0 0 0 1px #bcbcbc;"></div>
<div class="a t" id="t55" style="left:575.40px;top:329px;color:#6d6d6d;font-size:11px;letter-spacing:-0.220px;">Search multiple values (comma delimited)</div>
<div class="a" style="left:796px;top:325px;width:50px;height:21px;background:#cccccc;box-shadow:inset 0 0 0 1px #bfbfbf;"></div>
<svg class="a" style="left:831px;top:331px" width="13" height="8" viewBox="0 0 13 8" shape-rendering="crispEdges"><path d="M2.10 3.10 L6.00 6.60 L9.90 3.10" fill="none" stroke="#a8a8a8" stroke-width="1.25" shape-rendering="geometricPrecision"/></svg>
<div class="a t" id="t56" style="left:799.00px;top:329px;color:#838383;font-size:11px;letter-spacing:-0.275px;">Or</div>
<div class="a" style="left:848px;top:325px;width:144px;height:21px;background:#cccccc;box-shadow:inset 0 0 0 1px #bfbfbf;"></div>
<svg class="a" style="left:977px;top:331px" width="13" height="8" viewBox="0 0 13 8" shape-rendering="crispEdges"><path d="M2.10 3.10 L6.00 6.60 L9.90 3.10" fill="none" stroke="#a8a8a8" stroke-width="1.25" shape-rendering="geometricPrecision"/></svg>
<div class="a t" id="t57" style="left:850.90px;top:329px;color:#838383;font-size:11px;letter-spacing:-0.196px;width:122px;overflow:hidden;">Search only in major streams</div>
<div class="a" style="left:430px;top:350px;width:13px;height:13px;background:#fff;box-shadow:inset 0 0 0 1px #bcbcbc;"></div>
<div class="a t" id="t58" style="left:444.90px;top:350px;color:#6d6d6d;font-size:11px;letter-spacing:-0.056px;">Use Windows search handlers to find text inside Microsoft Office documents and other file types</div>
<div class="a" style="left:430px;top:375px;width:264px;height:66px;box-shadow:inset 0 0 0 1px #dcdcdc;"></div>
<div class="a" style="left:436.7px;top:374px;width:42.69999999999999px;height:3px;background:#f0f0f0;"></div>
<div class="a t" id="t59" style="left:438.10px;top:369px;color:#000;font-size:11px;letter-spacing:-0.387px;">File Size</div>
<div class="a" style="left:443px;top:389px;width:13px;height:13px;background:#fff;box-shadow:inset 0 0 0 1px #333;"></div>
<div class="a t" id="t60" style="left:458.70px;top:390px;color:#000;font-size:11px;letter-spacing:0.083px;">At least:</div>
<div class="a" style="left:533px;top:387px;width:74px;height:21px;background:#f0f0f0;box-shadow:inset 0 0 0 1px #d9d9d9;outline:1px solid #fff;outline-offset:-2px;"></div>
<div class="a t" id="t61" style="left:538.20px;top:390px;color:#6d6d6d;font-size:11px;letter-spacing:0.375px;">0</div>
<div class="a" style="left:611px;top:387px;width:78px;height:21px;background:#cccccc;box-shadow:inset 0 0 0 1px #bfbfbf;"></div>
<svg class="a" style="left:674px;top:393px" width="13" height="8" viewBox="0 0 13 8" shape-rendering="crispEdges"><path d="M2.10 3.10 L6.00 6.60 L9.90 3.10" fill="none" stroke="#a8a8a8" stroke-width="1.25" shape-rendering="geometricPrecision"/></svg>
<div class="a t" id="t62" style="left:614.30px;top:391px;color:#838383;font-size:11px;letter-spacing:-0.003px;">Bytes</div>
<div class="a" style="left:443px;top:415px;width:13px;height:13px;background:#fff;box-shadow:inset 0 0 0 1px #333;"></div>
<div class="a t" id="t63" style="left:458.70px;top:415px;color:#000;font-size:11px;letter-spacing:0.020px;">At most:</div>
<div class="a" style="left:533px;top:413px;width:74px;height:21px;background:#f0f0f0;box-shadow:inset 0 0 0 1px #d9d9d9;outline:1px solid #fff;outline-offset:-2px;"></div>
<div class="a t" id="t64" style="left:539.60px;top:415px;color:#6d6d6d;font-size:11px;letter-spacing:-0.396px;">1000</div>
<div class="a" style="left:611px;top:413px;width:78px;height:21px;background:#cccccc;box-shadow:inset 0 0 0 1px #bfbfbf;"></div>
<svg class="a" style="left:674px;top:419px" width="13" height="8" viewBox="0 0 13 8" shape-rendering="crispEdges"><path d="M2.10 3.10 L6.00 6.60 L9.90 3.10" fill="none" stroke="#a8a8a8" stroke-width="1.25" shape-rendering="geometricPrecision"/></svg>
<div class="a t" id="t65" style="left:614.30px;top:417px;color:#838383;font-size:11px;letter-spacing:-0.003px;">Bytes</div>
<div class="a" style="left:704px;top:381px;width:13px;height:13px;background:#fff;box-shadow:inset 0 0 0 1px #333;"></div>
<svg class="a" style="left:704px;top:381px" width="13" height="13" viewBox="0 0 13 13" shape-rendering="crispEdges"><path d="M1.8 5.8 L5 9 L11 2.8" fill="none" stroke="#333" stroke-width="1.3" shape-rendering="geometricPrecision"/></svg>
<div class="a t" id="t66" style="left:719.20px;top:382px;color:#000;font-size:11px;letter-spacing:-0.082px;">Scan Subfolders in the following depth:</div>
<div class="a" style="left:923px;top:377px;width:86px;height:21px;background:#e1e1e1;box-shadow:inset 0 0 0 1px #adadad;"></div>
<svg class="a" style="left:994px;top:383px" width="13" height="8" viewBox="0 0 13 8" shape-rendering="crispEdges"><path d="M2.10 3.10 L6.00 6.60 L9.90 3.10" fill="none" stroke="#404040" stroke-width="1.25" shape-rendering="geometricPrecision"/></svg>
<div class="a t" id="t67" style="left:926.00px;top:381px;color:#000;font-size:11px;letter-spacing:-0.284px;">Unlimited</div>
<div class="a" style="left:704px;top:402px;width:13px;height:13px;background:#fff;box-shadow:inset 0 0 0 1px #333;"></div>
<div class="a t" id="t68" style="left:719.20px;top:402px;color:#000;font-size:11px;letter-spacing:-0.246px;">Scan NTFS symbolic links/junction points</div>
<div class="a" style="left:704px;top:425px;width:13px;height:13px;background:#fff;box-shadow:inset 0 0 0 1px #333;"></div>
<svg class="a" style="left:704px;top:425px" width="13" height="13" viewBox="0 0 13 13" shape-rendering="crispEdges"><path d="M1.8 5.8 L5 9 L11 2.8" fill="none" stroke="#333" stroke-width="1.3" shape-rendering="geometricPrecision"/></svg>
<div class="a t" id="t69" style="left:719.20px;top:425px;color:#000;font-size:11px;letter-spacing:-0.309px;">Find Files</div>
<div class="a" style="left:850px;top:425px;width:13px;height:13px;background:#fff;box-shadow:inset 0 0 0 1px #333;"></div>
<div class="a t" id="t70" style="left:865.20px;top:425px;color:#000;font-size:11px;letter-spacing:-0.228px;">Find Folders</div>
<div class="a" style="left:430px;top:448px;width:470px;height:63px;box-shadow:inset 0 0 0 1px #dcdcdc;"></div>
<div class="a" style="left:436.8px;top:447px;width:52.5px;height:3px;background:#f0f0f0;"></div>
<div class="a t" id="t71" style="left:438.20px;top:442px;color:#000;font-size:11px;letter-spacing:0.203px;">Attributes</div>
<div class="a t" id="t72" style="left:438.20px;top:460px;color:#000;font-size:11px;letter-spacing:-0.133px;">Read Only:</div>
<div class="a" style="left:511px;top:457px;width:66px;height:21px;background:#e1e1e1;box-shadow:inset 0 0 0 1px #adadad;"></div>
<svg class="a" style="left:562px;top:463px" width="13" height="8" viewBox="0 0 13 8" shape-rendering="crispEdges"><path d="M2.10 3.10 L6.00 6.60 L9.90 3.10" fill="none" stroke="#404040" stroke-width="1.25" shape-rendering="geometricPrecision"/></svg>
<div class="a t" id="t73" style="left:513.80px;top:461px;color:#000;font-size:11px;letter-spacing:-0.010px;">Both</div>
<div class="a t" id="t74" style="left:438.20px;top:486px;color:#000;font-size:11px;letter-spacing:-0.091px;">System:</div>
<div class="a" style="left:511px;top:484px;width:66px;height:21px;background:#e1e1e1;box-shadow:inset 0 0 0 1px #adadad;"></div>
<svg class="a" style="left:562px;top:490px" width="13" height="8" viewBox="0 0 13 8" shape-rendering="crispEdges"><path d="M2.10 3.10 L6.00 6.60 L9.90 3.10" fill="none" stroke="#404040" stroke-width="1.25" shape-rendering="geometricPrecision"/></svg>
<div class="a t" id="t75" style="left:513.80px;top:488px;color:#000;font-size:11px;letter-spacing:-0.010px;">Both</div>
<div class="a t" id="t76" style="left:588.00px;top:460px;color:#000;font-size:11px;letter-spacing:-0.089px;">Hidden:</div>
<div class="a" style="left:661px;top:457px;width:66px;height:21px;background:#e1e1e1;box-shadow:inset 0 0 0 1px #adadad;"></div>
<svg class="a" style="left:712px;top:463px" width="13" height="8" viewBox="0 0 13 8" shape-rendering="crispEdges"><path d="M2.10 3.10 L6.00 6.60 L9.90 3.10" fill="none" stroke="#404040" stroke-width="1.25" shape-rendering="geometricPrecision"/></svg>
<div class="a t" id="t77" style="left:663.80px;top:461px;color:#000;font-size:11px;letter-spacing:-0.010px;">Both</div>
<div class="a t" id="t78" style="left:588.20px;top:486px;color:#000;font-size:11px;letter-spacing:0.081px;">Archive:</div>
<div class="a" style="left:661px;top:483px;width:66px;height:21px;background:#e1e1e1;box-shadow:inset 0 0 0 1px #adadad;"></div>
<svg class="a" style="left:712px;top:489px" width="13" height="8" viewBox="0 0 13 8" shape-rendering="crispEdges"><path d="M2.10 3.10 L6.00 6.60 L9.90 3.10" fill="none" stroke="#404040" stroke-width="1.25" shape-rendering="geometricPrecision"/></svg>
<div class="a t" id="t79" style="left:663.80px;top:487px;color:#000;font-size:11px;letter-spacing:-0.010px;">Both</div>
<div class="a t" id="t80" style="left:740.90px;top:460px;color:#000;font-size:11px;letter-spacing:-0.166px;">Compressed:</div>
<div class="a" style="left:814px;top:455px;width:66px;height:21px;background:#e1e1e1;box-shadow:inset 0 0 0 1px #adadad;"></div>
<svg class="a" style="left:865px;top:461px" width="13" height="8" viewBox="0 0 13 8" shape-rendering="crispEdges"><path d="M2.10 3.10 L6.00 6.60 L9.90 3.10" fill="none" stroke="#404040" stroke-width="1.25" shape-rendering="geometricPrecision"/></svg>
<div class="a t" id="t81" style="left:816.80px;top:459px;color:#000;font-size:11px;letter-spacing:-0.010px;">Both</div>
<div class="a t" id="t82" style="left:740.90px;top:486px;color:#000;font-size:11px;letter-spacing:0.071px;">Encrypted:</div>
<div class="a" style="left:814px;top:481px;width:66px;height:21px;background:#e1e1e1;box-shadow:inset 0 0 0 1px #adadad;"></div>
<svg class="a" style="left:865px;top:487px" width="13" height="8" viewBox="0 0 13 8" shape-rendering="crispEdges"><path d="M2.10 3.10 L6.00 6.60 L9.90 3.10" fill="none" stroke="#404040" stroke-width="1.25" shape-rendering="geometricPrecision"/></svg>
<div class="a t" id="t83" style="left:816.80px;top:485px;color:#000;font-size:11px;letter-spacing:-0.010px;">Both</div>
<div class="a" style="left:428px;top:523px;width:567px;height:95px;box-shadow:inset 0 0 0 1px #dcdcdc;"></div>
<div class="a" style="left:434.3px;top:522px;width:46.0px;height:3px;background:#f0f0f0;"></div>
<div class="a t" id="t84" style="left:435.70px;top:517px;color:#000;font-size:11px;letter-spacing:-0.292px;">File Time</div>
<div class="a t" id="t85" style="left:435.00px;top:535px;color:#000;font-size:11px;letter-spacing:0.187px;">Created:</div>
<div class="a" style="left:505px;top:531px;width:98px;height:21px;background:#e1e1e1;box-shadow:inset 0 0 0 1px #adadad;"></div>
<svg class="a" style="left:588px;top:537px" width="13" height="8" viewBox="0 0 13 8" shape-rendering="crispEdges"><path d="M2.10 3.10 L6.00 6.60 L9.90 3.10" fill="none" stroke="#404040" stroke-width="1.25" shape-rendering="geometricPrecision"/></svg>
<div class="a t" id="t86" style="left:508.00px;top:535px;color:#000;font-size:11px;letter-spacing:-0.303px;">All Times</div>
<div class="a" style="left:607px;top:531px;width:47px;height:21px;background:#f0f0f0;box-shadow:inset 0 0 0 1px #d9d9d9;outline:1px solid #fff;outline-offset:-2px;"></div>
<div class="a t" id="t87" style="left:613.10px;top:534px;color:#6d6d6d;font-size:11px;letter-spacing:-0.276px;">5</div>
<div class="a" style="left:662px;top:531px;width:86px;height:21px;background:#fff;box-shadow:inset 0 0 0 1px #7a7a7a;"></div>
<div class="a t" id="t88" style="left:663.20px;top:535px;color:#6d6d6d;font-size:11px;letter-spacing:0.124px;">04.02.2020</div>
<svg class="a" style="left:733px;top:537px" width="13" height="8" viewBox="0 0 13 8" shape-rendering="crispEdges"><path d="M2.10 3.30 L6.00 6.80 L9.90 3.30" fill="none" stroke="#b8b8b8" stroke-width="1.25" shape-rendering="geometricPrecision"/></svg>
<div class="a" style="left:748px;top:531px;width:75px;height:21px;background:#fff;box-shadow:inset 0 0 0 1px #7a7a7a;"></div>
<div class="a t" id="t89" style="left:749.50px;top:535px;color:#6d6d6d;font-size:11px;letter-spacing:0.234px;">23:06:12</div>
<div class="a" style="left:805px;top:533px;width:15px;height:8px;background:#f0f0f0;box-shadow:inset 0 0 0 1px #e6e6e6;"></div>
<div class="a" style="left:805px;top:542px;width:15px;height:7px;background:#f0f0f0;box-shadow:inset 0 0 0 1px #e6e6e6;"></div>
<svg class="a" style="left:810px;top:535px" width="6" height="4" viewBox="0 0 6 4" shape-rendering="crispEdges"><path d="M0.2 3.5 L2.8 0.7 L5.4 3.5z" fill="#606060" shape-rendering="geometricPrecision"/></svg>
<svg class="a" style="left:810px;top:543px" width="6" height="4" viewBox="0 0 6 4" shape-rendering="crispEdges"><path d="M0.2 0.5 L2.8 3.3 L5.4 0.5z" fill="#606060" shape-rendering="geometricPrecision"/></svg>
<div class="a" style="left:829px;top:531px;width:86px;height:21px;background:#fff;box-shadow:inset 0 0 0 1px #7a7a7a;"></div>
<div class="a t" id="t90" style="left:830.20px;top:535px;color:#6d6d6d;font-size:11px;letter-spacing:0.124px;">04.02.2020</div>
<svg class="a" style="left:900px;top:537px" width="13" height="8" viewBox="0 0 13 8" shape-rendering="crispEdges"><path d="M2.10 3.30 L6.00 6.80 L9.90 3.30" fill="none" stroke="#b8b8b8" stroke-width="1.25" shape-rendering="geometricPrecision"/></svg>
<div class="a" style="left:916px;top:531px;width:75px;height:21px;background:#fff;box-shadow:inset 0 0 0 1px #7a7a7a;"></div>
<div class="a t" id="t91" style="left:917.50px;top:535px;color:#6d6d6d;font-size:11px;letter-spacing:0.234px;">23:06:12</div>
<div class="a" style="left:973px;top:533px;width:15px;height:8px;background:#f0f0f0;box-shadow:inset 0 0 0 1px #e6e6e6;"></div>
<div class="a" style="left:973px;top:542px;width:15px;height:7px;background:#f0f0f0;box-shadow:inset 0 0 0 1px #e6e6e6;"></div>
<svg class="a" style="left:978px;top:535px" width="6" height="4" viewBox="0 0 6 4" shape-rendering="crispEdges"><path d="M0.2 3.5 L2.8 0.7 L5.4 3.5z" fill="#606060" shape-rendering="geometricPrecision"/></svg>
<svg class="a" style="left:978px;top:543px" width="6" height="4" viewBox="0 0 6 4" shape-rendering="crispEdges"><path d="M0.2 0.5 L2.8 3.3 L5.4 0.5z" fill="#606060" shape-rendering="geometricPrecision"/></svg>
<div class="a t" id="t92" style="left:435.00px;top:563px;color:#000;font-size:11px;letter-spacing:-0.027px;">Modified:</div>
<div class="a" style="left:505px;top:559px;width:98px;height:21px;background:#e1e1e1;box-shadow:inset 0 0 0 1px #adadad;"></div>
<svg class="a" style="left:588px;top:565px" width="13" height="8" viewBox="0 0 13 8" shape-rendering="crispEdges"><path d="M2.10 3.10 L6.00 6.60 L9.90 3.10" fill="none" stroke="#404040" stroke-width="1.25" shape-rendering="geometricPrecision"/></svg>
<div class="a t" id="t93" style="left:508.00px;top:563px;color:#000;font-size:11px;letter-spacing:-0.300px;">Last XX minutes</div>
<div class="a" style="left:607px;top:559px;width:47px;height:21px;background:#fff;box-shadow:inset 0 0 0 1px #6a6a6a;"></div>
<div class="a t" id="t94" style="left:613.10px;top:562px;color:#000;font-size:11px;letter-spacing:-0.276px;">5</div>
<div class="a" style="left:661px;top:559px;width:86px;height:21px;background:#fff;box-shadow:inset 0 0 0 1px #7a7a7a;"></div>
<div class="a t" id="t95" style="left:662.20px;top:563px;color:#6d6d6d;font-size:11px;letter-spacing:0.124px;">04.02.2020</div>
<svg class="a" style="left:732px;top:565px" width="13" height="8" viewBox="0 0 13 8" shape-rendering="crispEdges"><path d="M2.10 3.30 L6.00 6.80 L9.90 3.30" fill="none" stroke="#b8b8b8" stroke-width="1.25" shape-rendering="geometricPrecision"/></svg>
<div class="a" style="left:748px;top:559px;width:75px;height:21px;background:#fff;box-shadow:inset 0 0 0 1px #7a7a7a;"></div>
<div class="a t" id="t96" style="left:749.50px;top:563px;color:#6d6d6d;font-size:11px;letter-spacing:0.234px;">23:06:12</div>
<div class="a" style="left:805px;top:561px;width:15px;height:8px;background:#f0f0f0;box-shadow:inset 0 0 0 1px #e6e6e6;"></div>
<div class="a" style="left:805px;top:570px;width:15px;height:7px;background:#f0f0f0;box-shadow:inset 0 0 0 1px #e6e6e6;"></div>
<svg class="a" style="left:810px;top:563px" width="6" height="4" viewBox="0 0 6 4" shape-rendering="crispEdges"><path d="M0.2 3.5 L2.8 0.7 L5.4 3.5z" fill="#606060" shape-rendering="geometricPrecision"/></svg>
<svg class="a" style="left:810px;top:571px" width="6" height="4" viewBox="0 0 6 4" shape-rendering="crispEdges"><path d="M0.2 0.5 L2.8 3.3 L5.4 0.5z" fill="#606060" shape-rendering="geometricPrecision"/></svg>
<div class="a" style="left:829px;top:559px;width:86px;height:21px;background:#fff;box-shadow:inset 0 0 0 1px #7a7a7a;"></div>
<div class="a t" id="t97" style="left:830.20px;top:563px;color:#6d6d6d;font-size:11px;letter-spacing:0.124px;">04.02.2020</div>
<svg class="a" style="left:900px;top:565px" width="13" height="8" viewBox="0 0 13 8" shape-rendering="crispEdges"><path d="M2.10 3.30 L6.00 6.80 L9.90 3.30" fill="none" stroke="#b8b8b8" stroke-width="1.25" shape-rendering="geometricPrecision"/></svg>
<div class="a" style="left:916px;top:559px;width:75px;height:21px;background:#fff;box-shadow:inset 0 0 0 1px #7a7a7a;"></div>
<div class="a t" id="t98" style="left:917.50px;top:563px;color:#6d6d6d;font-size:11px;letter-spacing:0.234px;">23:06:12</div>
<div class="a" style="left:973px;top:561px;width:15px;height:8px;background:#f0f0f0;box-shadow:inset 0 0 0 1px #e6e6e6;"></div>
<div class="a" style="left:973px;top:570px;width:15px;height:7px;background:#f0f0f0;box-shadow:inset 0 0 0 1px #e6e6e6;"></div>
<svg class="a" style="left:978px;top:563px" width="6" height="4" viewBox="0 0 6 4" shape-rendering="crispEdges"><path d="M0.2 3.5 L2.8 0.7 L5.4 3.5z" fill="#606060" shape-rendering="geometricPrecision"/></svg>
<svg class="a" style="left:978px;top:571px" width="6" height="4" viewBox="0 0 6 4" shape-rendering="crispEdges"><path d="M0.2 0.5 L2.8 3.3 L5.4 0.5z" fill="#606060" shape-rendering="geometricPrecision"/></svg>
<div class="a t" id="t99" style="left:433.40px;top:592px;color:#000;font-size:11px;letter-spacing:-0.183px;">Accessed:</div>
<div class="a" style="left:505px;top:588px;width:98px;height:21px;background:#e1e1e1;box-shadow:inset 0 0 0 1px #adadad;"></div>
<svg class="a" style="left:588px;top:594px" width="13" height="8" viewBox="0 0 13 8" shape-rendering="crispEdges"><path d="M2.10 3.10 L6.00 6.60 L9.90 3.10" fill="none" stroke="#404040" stroke-width="1.25" shape-rendering="geometricPrecision"/></svg>
<div class="a t" id="t100" style="left:508.00px;top:592px;color:#000;font-size:11px;letter-spacing:-0.303px;">All Times</div>
<div class="a" style="left:607px;top:588px;width:47px;height:21px;background:#f0f0f0;box-shadow:inset 0 0 0 1px #d9d9d9;outline:1px solid #fff;outline-offset:-2px;"></div>
<div class="a t" id="t101" style="left:613.10px;top:591px;color:#6d6d6d;font-size:11px;letter-spacing:-0.276px;">1</div>
<div class="a" style="left:661px;top:588px;width:86px;height:21px;background:#fff;box-shadow:inset 0 0 0 1px #7a7a7a;"></div>
<div class="a t" id="t102" style="left:662.20px;top:592px;color:#6d6d6d;font-size:11px;letter-spacing:0.124px;">04.02.2020</div>
<svg class="a" style="left:732px;top:594px" width="13" height="8" viewBox="0 0 13 8" shape-rendering="crispEdges"><path d="M2.10 3.30 L6.00 6.80 L9.90 3.30" fill="none" stroke="#b8b8b8" stroke-width="1.25" shape-rendering="geometricPrecision"/></svg>
<div class="a" style="left:748px;top:588px;width:75px;height:21px;background:#fff;box-shadow:inset 0 0 0 1px #7a7a7a;"></div>
<div class="a t" id="t103" style="left:749.50px;top:592px;color:#6d6d6d;font-size:11px;letter-spacing:0.234px;">23:06:12</div>
<div class="a" style="left:805px;top:590px;width:15px;height:8px;background:#f0f0f0;box-shadow:inset 0 0 0 1px #e6e6e6;"></div>
<div class="a" style="left:805px;top:599px;width:15px;height:7px;background:#f0f0f0;box-shadow:inset 0 0 0 1px #e6e6e6;"></div>
<svg class="a" style="left:810px;top:592px" width="6" height="4" viewBox="0 0 6 4" shape-rendering="crispEdges"><path d="M0.2 3.5 L2.8 0.7 L5.4 3.5z" fill="#606060" shape-rendering="geometricPrecision"/></svg>
<svg class="a" style="left:810px;top:600px" width="6" height="4" viewBox="0 0 6 4" shape-rendering="crispEdges"><path d="M0.2 0.5 L2.8 3.3 L5.4 0.5z" fill="#606060" shape-rendering="geometricPrecision"/></svg>
<div class="a" style="left:829px;top:588px;width:86px;height:21px;background:#fff;box-shadow:inset 0 0 0 1px #7a7a7a;"></div>
<div class="a t" id="t104" style="left:830.20px;top:592px;color:#6d6d6d;font-size:11px;letter-spacing:0.124px;">04.02.2020</div>
<svg class="a" style="left:900px;top:594px" width="13" height="8" viewBox="0 0 13 8" shape-rendering="crispEdges"><path d="M2.10 3.30 L6.00 6.80 L9.90 3.30" fill="none" stroke="#b8b8b8" stroke-width="1.25" shape-rendering="geometricPrecision"/></svg>
<div class="a" style="left:916px;top:588px;width:75px;height:21px;background:#fff;box-shadow:inset 0 0 0 1px #7a7a7a;"></div>
<div class="a t" id="t105" style="left:917.50px;top:592px;color:#6d6d6d;font-size:11px;letter-spacing:0.234px;">23:06:12</div>
<div class="a" style="left:973px;top:590px;width:15px;height:8px;background:#f0f0f0;box-shadow:inset 0 0 0 1px #e6e6e6;"></div>
<div class="a" style="left:973px;top:599px;width:15px;height:7px;background:#f0f0f0;box-shadow:inset 0 0 0 1px #e6e6e6;"></div>
<svg class="a" style="left:978px;top:592px" width="6" height="4" viewBox="0 0 6 4" shape-rendering="crispEdges"><path d="M0.2 3.5 L2.8 0.7 L5.4 3.5z" fill="#606060" shape-rendering="geometricPrecision"/></svg>
<svg class="a" style="left:978px;top:600px" width="6" height="4" viewBox="0 0 6 4" shape-rendering="crispEdges"><path d="M0.2 0.5 L2.8 3.3 L5.4 0.5z" fill="#606060" shape-rendering="geometricPrecision"/></svg>
<div class="a" style="left:430px;top:632px;width:13px;height:13px;background:#fff;box-shadow:inset 0 0 0 1px #333;"></div>
<svg class="a" style="left:430px;top:632px" width="13" height="13" viewBox="0 0 13 13" shape-rendering="crispEdges"><path d="M1.8 5.8 L5 9 L11 2.8" fill="none" stroke="#333" stroke-width="1.3" shape-rendering="geometricPrecision"/></svg>
<div class="a t" id="t106" style="left:445.00px;top:632px;color:#000;font-size:11px;letter-spacing:0.114px;">Stop the search after finding...</div>
<div class="a" style="left:631px;top:629px;width:62px;height:20px;background:#fff;box-shadow:inset 0 0 0 1px #7a7a7a;"></div>
<div class="a t" id="t107" style="left:636.90px;top:632px;color:#000;font-size:11px;letter-spacing:-0.159px;">10000</div>
<div class="a t" id="t108" style="left:698.80px;top:632px;color:#000;font-size:11px;letter-spacing:-0.347px;">Files</div>
<div class="a" style="left:643px;top:659px;width:135px;height:21px;background:#e1e1e1;box-shadow:inset 0 0 0 2px #0078d7;"></div>
<div class="a t" id="t109" style="left:679.55px;top:663px;color:#000;font-size:11px;letter-spacing:-0.037px;">Start Search</div>
<div class="a" style="left:793px;top:659px;width:73px;height:21px;background:#e1e1e1;box-shadow:inset 0 0 0 1px #adadad;"></div>
<div class="a t" id="t110" style="left:815.40px;top:663px;color:#000;font-size:11px;letter-spacing:-0.225px;">Close</div>
<div class="a" style="left:882px;top:659px;width:127px;height:21px;background:#e1e1e1;box-shadow:inset 0 0 0 1px #adadad;"></div>
<div class="a t" id="t111" style="left:903.60px;top:663px;color:#000;font-size:11px;letter-spacing:0.092px;">Reset To Default</div>
<svg class="a" style="left:1005px;top:677px" width="15" height="15" viewBox="0 0 15 15" shape-rendering="crispEdges"><g shape-rendering="geometricPrecision"><path d="M3.2 14.3 L14.3 3.2 M7.2 14.3 L14.3 7.2 M11.2 14.3 L14.3 11.2" stroke="#fff" stroke-width="1.2"/><path d="M4.6 14.6 L14.6 4.6 M8.6 14.6 L14.6 8.6 M12.6 14.6 L14.6 12.6" stroke="#9c9c9c" stroke-width="1.5"/></g></svg>
</body></html>
